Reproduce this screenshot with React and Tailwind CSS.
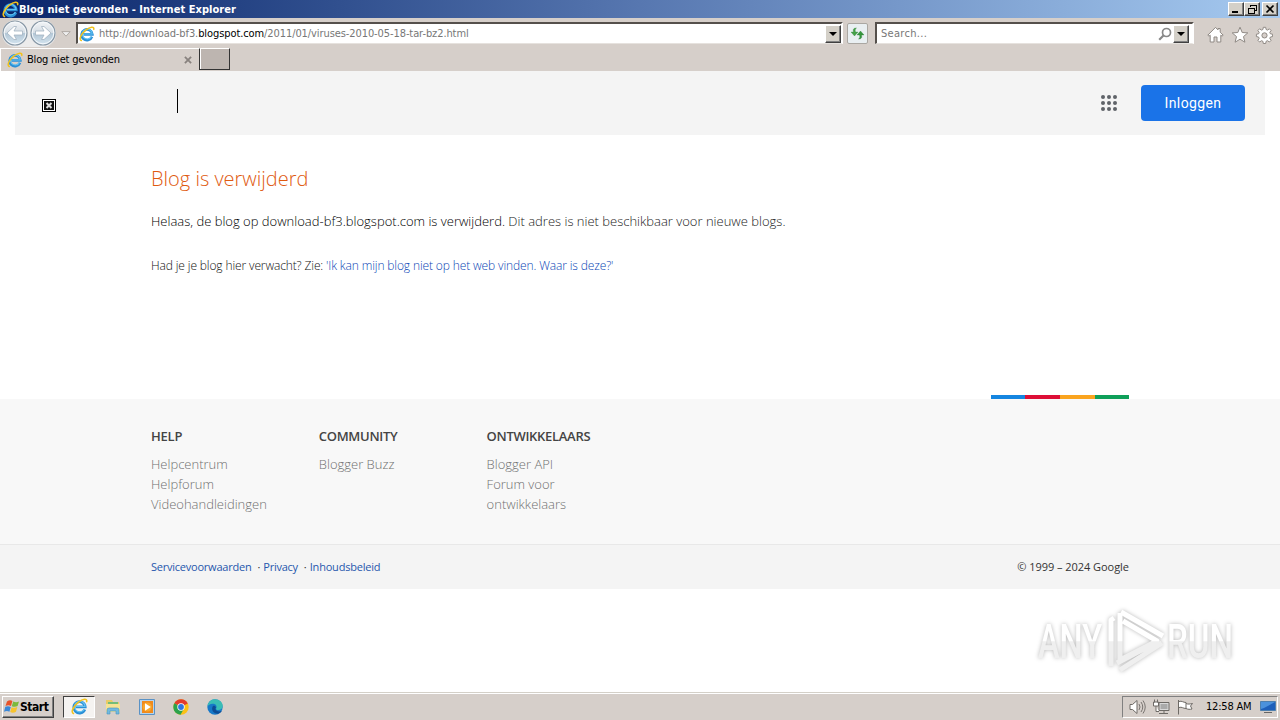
import React from 'react';

const ui = "font-['DejaVu_Sans_Condensed','DejaVu_Sans',sans-serif] [font-stretch:condensed]";

function IELogo({ className }) {
  return (
    <svg viewBox="0 0 18 18" className={className} fill="none">
      <path d="M14.6 12.1A6 6 0 1 1 15 9.4H5" stroke="#2b8fd6" strokeWidth="3" />
      <path d="M14.3 11.6A5.6 5.6 0 1 1 14.9 9H5" stroke="#62c4f3" strokeWidth="1.2" />
      <path d="M2.6 16.4C-.6 15.2 2.6 8.6 7.6 4.6S17.4.2 16.6 3.8" stroke="#f2c21c" strokeWidth="1.7" strokeLinecap="round" />
    </svg>
  );
}

function NavArrow({ flip }) {
  return (
    <svg viewBox="0 0 26 26" className={flip ? 'h-[26px] w-[26px] -scale-x-100' : 'h-[26px] w-[26px]'}>
      <defs>
        <linearGradient id="orb" x1="0" y1="0" x2="0" y2="1">
          <stop offset="0" stopColor="#f4f6f8" />
          <stop offset=".48" stopColor="#d5dde4" />
          <stop offset=".52" stopColor="#b3c7d6" />
          <stop offset="1" stopColor="#d5e5f0" />
        </linearGradient>
      </defs>
      <circle cx="13" cy="13" r="12" fill="url(#orb)" stroke="#8797a5" strokeWidth="1.2" />
      <circle cx="13" cy="13" r="10.8" fill="none" stroke="#f5f9fc" strokeWidth="1" />
      <path d="M5 13l7-6.500h2.500L12 11H20.500v4H12l2.500 4.500H12z" fill="#fff" stroke="#a3b4c2" strokeWidth=".8" />
    </svg>
  );
}

function DropButton() {
  return (
    <span className="flex h-[18px] w-4 shrink-0 items-center justify-center border border-t-white border-l-white border-r-[#404040] border-b-[#404040] bg-[#d4d0c8] shadow-[inset_-1px_-1px_0_#808080]">
      <svg viewBox="0 0 8 4" className="h-1 w-2"><path d="M0 0h8L4 4z" fill="#000" /></svg>
    </span>
  );
}

function WinButton({ children }) {
  return (
    <span className="flex h-[14px] w-4 items-center justify-center border border-t-white border-l-white border-r-[#404040] border-b-[#404040] bg-[#d4d0c8] shadow-[inset_-1px_-1px_0_#808080]">
      <svg viewBox="0 0 12 11" className="h-[11px] w-3 shrink-0" fill="none" stroke="#000" shapeRendering="crispEdges">{children}</svg>
    </span>
  );
}

function TitleBar() {
  return (
    <div className="flex h-[18px] items-center bg-linear-to-r from-[#0a246a] via-[#5777b0] to-[#a6caf0] pl-[2px] pr-[2px]">
      <IELogo className="h-[17px] w-[17px]" />
      <span className={`${ui} flex-1 whitespace-nowrap pt-[1px] text-[11px] font-bold leading-[17px] tracking-[0.04px] text-white`}>Blog niet gevonden - Internet Explorer</span>
      <WinButton><path d="M2 8.500h6M2 7.500h6" /></WinButton>
      <WinButton><path d="M4 2.500V1h6v5.500H8M4 1.500h6M2 4h6v5.500H2zM2 4.500h6" /></WinButton>
      <span className="w-[2px]" />
      <WinButton><path d="M2.500 1.500l7 7M9.500 1.500l-7 7" strokeWidth="1.700" shapeRendering="auto" /></WinButton>
    </div>
  );
}

function Toolbar() {
  return (
    <div className="flex h-[30px] items-center bg-[#d6cfca] pl-[2px]">
      <div className="flex h-[27px] items-center rounded-full bg-[#ececec]">
        <NavArrow />
        <span className="w-[2px]" />
        <NavArrow flip />
      </div>
      <svg viewBox="0 0 10 6" className="ml-[5px] mt-[1px] h-[6px] w-[10px]"><path d="M.8.6h8.400L5 5.200z" fill="#eee" stroke="#b0aaa5" /></svg>
      <div className="ml-[5px] flex h-[22px] w-[767px] items-center border-2 border-b border-t-[#55504c] border-l-[#55504c] border-r-white border-b-[#e6e2de] bg-white pl-[1px]">
        <IELogo className="h-4 w-4" />
        <span className={`${ui} ml-[4px] flex-1 whitespace-nowrap pt-[2px] text-[11px] tracking-[-0.09px] text-[#777]`}>http://download-bf3.<span className="text-black">blogspot.com</span>/2011/01/viruses-2010-05-18-tar-bz2.html</span>
        <DropButton />
      </div>
      <div className="ml-[4px] flex h-[21px] w-[21px] items-center justify-center rounded-[2px] border border-[#aaa7a2] bg-[#e9eff2]">
        <svg viewBox="0 0 15 13" className="h-[13px] w-[15px]">
          <path d="M6.500 1C3 1 3 3 3.500 5H1l3.500 4L8 5H5.500C5 3 5 2 6.500 1z" fill="#45a049" stroke="#278231" strokeWidth=".3" />
          <path d="M8.500 12C12 12 12 10 11.500 8H14l-3.500-4L7 8h2.500c.5 2 .5 3-1 4z" fill="#35953d" stroke="#1d7529" strokeWidth=".3" />
        </svg>
      </div>
      <div className="ml-[7px] flex h-[22px] w-[319px] items-center border-2 border-b border-t-[#55504c] border-l-[#55504c] border-r-white border-b-[#e6e2de] bg-white pr-[3px]">
        <span className={`${ui} ml-[4px] flex-1 pt-[2px] text-[11px] tracking-[0.3px] text-[#777]`}>Search...</span>
        <svg viewBox="0 0 14 14" className="mr-[1px] h-[14px] w-[14px]" fill="none" stroke="#888"><circle cx="8.500" cy="5.500" r="4" strokeWidth="1.700" /><path d="M5.500 8.500L1.200 12.800" strokeWidth="2.200" /></svg>
        <DropButton />
      </div>
      <svg viewBox="0 0 66 18" className="ml-[13px] mt-[3px] h-[18px] w-[66px]" fill="#fff" stroke="#8f8984" strokeWidth="1" strokeLinejoin="round">
        <path d="M.8 9.200L8.500 1.400l2.500 2.500V2.500h2.200v3.700l3 3-1.200 1-1.200-1V16H10v-5H7v5H3.200V9.200l-1.200 1z" />
        <path d="M33 1.200l2.200 5.300 5.600.4-4.300 3.700 1.400 5.600L33 13.200l-4.900 3 1.400-5.600-4.300-3.700 5.600-.4z" />
        <path d="M56.300 1.300h2.400l.4 2.200 1.400.6 1.900-1.300 1.700 1.700-1.300 1.900.6 1.400 2.200.4v2.400l-2.200.4-.6 1.400 1.300 1.900-1.700 1.700-1.900-1.300-1.400.6-.4 2.200h-2.400l-.4-2.200-1.400-.6-1.900 1.300-1.700-1.700 1.300-1.900-.6-1.400-2.200-.4V8.200l2.200-.4.6-1.400-1.300-1.900 1.700-1.700 1.900 1.300 1.400-.6z" />
        <circle cx="57.500" cy="9.400" r="2.600" fill="#d6cfca" />
      </svg>
    </div>
  );
}

function TabRow() {
  return (
    <div className="flex h-[23px] bg-[#d6cfca]">
      <div className="flex w-[199px] items-center border-t border-l border-white pl-[6px] pr-[7px]">
        <IELogo className="h-4 w-4" />
        <span className={`${ui} ml-[4px] flex-1 whitespace-nowrap pt-[1px] text-[11px] tracking-[-0.2px] text-black`}>Blog niet gevonden</span>
        <svg viewBox="0 0 9 9" className="h-[8px] w-[8px]"><path d="M1 1l7 7M8 1L1 8" stroke="#88827e" strokeWidth="2" /></svg>
      </div>
      <div className="h-[22px] w-[31px] border border-t-white border-l-[#333] border-r-[#333] border-b-[#333] bg-[#bdb5b0] shadow-[inset_1px_0_0_#fff]" />
    </div>
  );
}

const columns = [
  { title: 'HELP', track: 'tracking-[-0.2px]', links: ['Helpcentrum', 'Helpforum', 'Videohandleidingen'] },
  { title: 'COMMUNITY', track: 'tracking-[-0.3px]', links: ['Blogger Buzz'] },
  { title: 'ONTWIKKELAARS', track: 'tracking-[-0.3px]', links: ['Blogger API', 'Forum voor', 'ontwikkelaars'] },
];

function Page() {
  return (
    <main className="flex h-[621px] flex-col bg-white font-['Open_Sans',sans-serif] font-light">
      <header className="mx-[15px] flex h-16 shrink-0 items-center bg-[#f4f4f4] pr-5 pl-[27px]">
        <svg viewBox="0 0 14 13" className="mt-[5px] h-[13px] w-[14px]" shapeRendering="crispEdges">
          <path d="M0 0h14v13H0z" fill="#000" /><path d="M1 1h12v11H1z" fill="#fff" /><path d="M2 2h10v9H2z" fill="#111" />
          <path d="M4.500 4l5 5M9.500 4l-5 5" stroke="#ddd" strokeWidth="2" shapeRendering="auto" />
        </svg>
        <span className="mb-1 ml-[121px] h-6 w-px bg-black" />
        <svg viewBox="0 0 18 18" className="ml-auto h-[18px] w-[18px]" fill="#5f6368">
          {[3, 9, 15].map((y) => [3, 9, 15].map((x) => <circle key={`${x}-${y}`} cx={x} cy={y} r="2" />))}
        </svg>
        <button className="ml-[23px] h-9 w-[104px] rounded-[4px] bg-[#1a73e8] font-['Roboto',sans-serif] text-[14px] font-normal tracking-[0.4px] text-white">Inloggen</button>
      </header>

      <section className="h-[260px] shrink-0 pt-[30px] pl-[151px]">
        <h1 className="text-[20px] leading-7 text-[#e05a10]">Blog is verwijderd</h1>
        <p className="mt-[18px] whitespace-nowrap text-[13px] leading-5 text-[#222]"><span className="text-black">Helaas, de blog op download-bf3.blogspot.com is verwijderd.</span> Dit adres is niet beschikbaar voor nieuwe blogs.</p>
        <p className="mt-[25px] whitespace-nowrap text-[12px] leading-5 tracking-[-0.125px] text-[#111]">Had je je blog hier verwacht? Zie: <a className="text-[#0a45b5]">'Ik kan mijn blog niet op het web vinden. Waar is deze?'</a></p>
      </section>

      <div className="flex h-1 shrink-0 pl-[991px]">
        <span className="w-[34px] bg-[#1485e0]" />
        <span className="w-[35px] bg-[#dd0e36]" />
        <span className="w-[35px] bg-[#faa41f]" />
        <span className="w-[34px] bg-[#0f9f59]" />
      </div>

      <footer className="shrink-0">
        <div className="flex h-[145px] bg-[#f8f8f8] pt-[27px] pl-[151px]">
          {columns.map((c) => (
            <div key={c.title} className="w-[167.8px]">
              <h2 className={`text-[13px] font-semibold leading-5 text-[#444] ${c.track}`}>{c.title}</h2>
              <ul className="mt-2 text-[13px] leading-5 text-[#707070]">
                {c.links.map((label) => <li key={label}>{label}</li>)}
              </ul>
            </div>
          ))}
        </div>
        <div className="flex h-[45px] items-center border-t border-[#e8e8e8] bg-[#f4f4f4] pr-[151px] pl-[151px] text-[11px] font-normal text-[#333]">
          <span className="tracking-[-0.23px] text-[#2657ad]">Servicevoorwaarden</span>
          <span className="ml-[6px] mr-[3px]">·</span>
          <span className="tracking-[-0.25px] text-[#2657ad]">Privacy</span>
          <span className="ml-[6px] mr-[3px]">·</span>
          <span className="tracking-[-0.2px] text-[#2657ad]">Inhoudsbeleid</span>
          <span className="ml-auto tracking-[-0.04px]">© 1999 – 2024 Google</span>
        </div>
      </footer>

      <div className="mt-[19px] mr-[8px] flex h-[66px] items-center justify-end drop-shadow-[0_0_2px_rgba(0,0,0,0.28)]">
        <svg viewBox="0 0 236 66" className="h-[66px] w-[236px]" fill="none">
          <defs>
            <linearGradient id="mark" x1="0" y1="0" x2="0" y2="66" gradientUnits="userSpaceOnUse">
              <stop offset=".5" stopColor="#fff" /><stop offset=".51" stopColor="#efefef" />
            </linearGradient>
          </defs>
          <g fontFamily="Roboto, sans-serif" fontSize="49" fontWeight="500" fill="url(#mark)">
            <text x="2" y="50" textLength="64" lengthAdjust="spacingAndGlyphs">ANY</text>
            <text x="131" y="50" textLength="66" lengthAdjust="spacingAndGlyphs">RUN</text>
          </g>
          <g stroke="url(#mark)" strokeWidth="5" strokeLinejoin="round">
            <path d="M75 58V12l3-2" />
            <path d="M84 5v47L121 33 87 13" />
            <path d="M85 4l42 24M81 55l42-22M84 62l42-27" />
          </g>
        </svg>
      </div>
    </main>
  );
}

function Taskbar() {
  return (
    <div className="flex h-[28px] items-center border-t border-[#d4d0c8] bg-[#d6cfca] pl-[2px] pr-[2px] shadow-[inset_0_1px_0_#fff]">
      <div className="flex h-[22px] w-[52px] items-center border border-t-white border-l-white border-r-[#404040] border-b-[#404040] pl-[1px] shadow-[inset_-1px_-1px_0_#808080]">
        <svg viewBox="0 0 16 15" className="h-[15px] w-4 shrink-0">
          <path d="M3 2.500Q6 .5 8.400 2L7 7Q4.500 5.500 1.500 7z" fill="#e8532a" />
          <path d="M9.200 2.400Q12 4 15 2.500L13.600 7Q11 8.500 7.800 7.200z" fill="#7cb93d" />
          <path d="M1.300 7.800Q4 6.500 6.800 7.900L5.400 12.700Q3 11.300 0 12.700z" fill="#3b88d8" />
          <path d="M7.600 8.200Q10.500 9.500 13.300 8L12 12.700Q9 14.500 6.200 13z" fill="#f7c32e" />
        </svg>
        <span className={`${ui} text-[12px] font-bold tracking-[-0.45px] text-black`}>Start</span>
      </div>
      <div className="ml-[9px] flex h-[22px] w-[32px] items-center justify-center border border-t-[#404040] border-l-[#404040] border-r-white border-b-white bg-[#f5f3f1]">
        <IELogo className="h-[17px] w-[17px]" />
      </div>
      <svg viewBox="0 0 18 18" className="ml-[9px] h-[18px] w-[18px]">
        <path d="M2 2h6l1 2h6v9H2z" fill="#e9cc67" /><path d="M4 4h10v5H4z" fill="#74bd78" /><path d="M2 6h14v8H2z" fill="#f5e394" />
        <path d="M3 16v-4q0-2 2-2h8q2 0 2 2v4h-3v-3H6v3z" fill="#72b9df" stroke="#4594bf" strokeWidth=".6" />
      </svg>
      <svg viewBox="0 0 18 18" className="ml-[16px] h-[18px] w-[18px]">
        <path d="M1.500 1.500h15v15h-15z" fill="#b7d4ec" stroke="#5a92c5" /><path d="M4 3h11v12H4z" fill="#f08a1c" />
        <circle cx="9.300" cy="9" r="4.600" fill="#f9a72b" /><path d="M7 5.200L12.800 9 7 12.800z" fill="#fff" />
      </svg>
      <svg viewBox="0 0 16 16" className="ml-[17px] h-4 w-4">
        <circle cx="8" cy="8" r="7.700" fill="#fbc116" />
        <path d="M8 8L1.330 4.150A7.700 7.700 0 0 1 14.670 4.150L14.700 4.600z" fill="#e33b2e" />
        <path d="M8 8L1.330 4.150A7.700 7.700 0 0 0 7.500 15.700L10.800 10z" fill="#2ca24c" />
        <circle cx="8" cy="8" r="3.700" fill="#fff" /><circle cx="8" cy="8" r="2.900" fill="#2f76e0" />
      </svg>
      <svg viewBox="0 0 16 16" className="ml-[18px] h-4 w-4">
        <circle cx="8" cy="8" r="7.700" fill="#1678c8" />
        <path d="M.5 7.500C1 3 4 .3 8 .3c4.500 0 7.700 3 7.700 6.500 0 2.800-2 4.200-4.500 4.200-1.700 0-2.600-.7-2-1.500C10.500 7 8.500 4.500 5.500 4.800 3 5 1.200 6.200.5 7.500z" fill="#39bdb5" />
        <path d="M5.800 7.200c-2 3.400.6 7.600 5.200 7.500 1.800-.3 3.200-1.500 4-2.900-2 1-5 1-6.200-1-.6-1.200-.3-2 .3-2.500-.8-1.500-2.200-2-3.300-1.100z" fill="#0d4c94" />
      </svg>
      <div className="ml-auto flex h-[22px] w-[156px] items-center border border-t-[#808080] border-l-[#808080] border-r-white border-b-white pl-[6px] pr-[1px]">
        <svg viewBox="0 0 66 18" className="h-[18px] w-[66px] shrink-0" fill="#fff" stroke="#6e6a66">
          <path d="M1 6.500h2.500L8 2.500v13l-4.500-4H1z" /><path d="M10 6q2 3 0 6M12 4q3.500 5 0 10M14 2.500q4.500 6.500 0 13" fill="none" strokeWidth=".9" />
          <path d="M30 4.500h10v8H30z" fill="#d9d9d9" /><path d="M31.500 6h7v5h-7z" fill="#aaa" stroke="none" /><path d="M30 15.500h9M35 13v2" />
          <path d="M25.500 1.500v3M28.500 1.500v3M24.500 4h5v4h-5zM27 8v5.500h3" />
          <path d="M49.500 2v14.500M50 3.500c3-1 4 1 7 1v6c-3 0-4-2-7-1M57 5.500c2 1 4 .5 6.500 0l-2 2.500 1.500 3c-2 .5-4 .5-6-.5" />
        </svg>
        <span className={`${ui} ml-[11px] whitespace-nowrap pt-[1px] text-[11px] tracking-[-0.2px] text-black`}>12:58 AM</span>
        <svg viewBox="0 0 16 14" className="ml-auto h-[14px] w-4 shrink-0"><path d="M.5 1.500h15v9H.5z" fill="#1e5fba" stroke="#4e7fae" /><path d="M1 2h14L4 8 1 9z" fill="#4b91dc" /><path d="M4 12.500h8" stroke="#666" /></svg>
      </div>
    </div>
  );
}

export default function App() {
  return (
    <div className="flex h-[720px] w-[1280px] flex-col overflow-hidden">
      <TitleBar />
      <Toolbar />
      <TabRow />
      <Page />
      <Taskbar />
    </div>
  );
}
